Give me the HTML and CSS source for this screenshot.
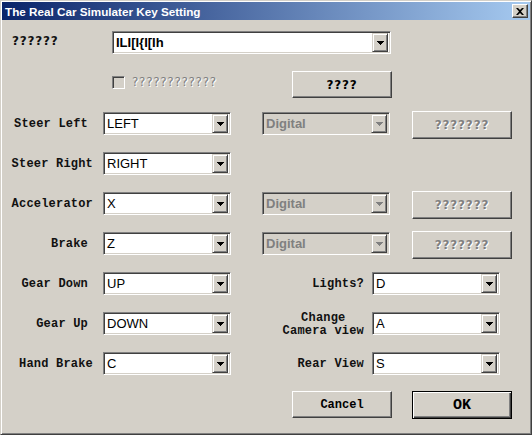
FILE: index.html
```html
<!DOCTYPE html>
<html lang="en">

<head>
    <meta charset="UTF-8">
    <title>The Real Car Simulater Key Setting</title>
    <link rel="stylesheet" href="styles.css">
</head>

<body>
    <div class="window">
        <div class="titlebar">
            <span class="title">The Real Car Simulater Key Setting</span>
            <span class="close">
                <svg width="8" height="7" viewBox="0 0 8 7"><path d="M0 0h2l2 2 2-2h2L5 3.5 8 7H6L4 5 2 7H0l3-3.5z" fill="#000"/></svg>
            </span>
        </div>

        <div class="form">
            <!-- device select -->
            <div class="row-top">
                <div class="q-label">??????</div>
                <div class="combo wide">
                    <span class="value strong">ILI[I{I[Ih</span>
                    <span class="drop"><svg width="7" height="4"><path d="M0 0h7v1H0zM1 1h5v1H1zM2 2h3v1H2zM3 3h1v1H3z"/></svg></span>
                </div>
            </div>

            <div class="row-check">
                <div class="check">
                    <span class="box"></span>
                    <span class="etched thin">????????????</span>
                </div>
                <div class="btn q">????</div>
            </div>

            <!-- key rows -->
            <div class="keys">
                <div class="key-row">
                    <div class="lbl short">Steer Left</div>
                    <div class="combo"><span class="value">LEFT</span><span class="drop"><svg width="7" height="4"><path d="M0 0h7v1H0zM1 1h5v1H1zM2 2h3v1H2zM3 3h1v1H3z"/></svg></span></div>
                    <div class="combo off"><span class="value">Digital</span><span class="drop"><svg width="7" height="4"><path d="M0 0h7v1H0zM1 1h5v1H1zM2 2h3v1H2zM3 3h1v1H3z"/></svg></span></div>
                    <div class="btn q etched">???????</div>
                </div>

                <div class="key-row">
                    <div class="lbl">Steer Right</div>
                    <div class="combo"><span class="value">RIGHT</span><span class="drop"><svg width="7" height="4"><path d="M0 0h7v1H0zM1 1h5v1H1zM2 2h3v1H2zM3 3h1v1H3z"/></svg></span></div>
                </div>

                <div class="key-row">
                    <div class="lbl">Accelerator</div>
                    <div class="combo"><span class="value">X</span><span class="drop"><svg width="7" height="4"><path d="M0 0h7v1H0zM1 1h5v1H1zM2 2h3v1H2zM3 3h1v1H3z"/></svg></span></div>
                    <div class="combo off"><span class="value">Digital</span><span class="drop"><svg width="7" height="4"><path d="M0 0h7v1H0zM1 1h5v1H1zM2 2h3v1H2zM3 3h1v1H3z"/></svg></span></div>
                    <div class="btn q etched">???????</div>
                </div>

                <div class="key-row">
                    <div class="lbl short">Brake</div>
                    <div class="combo"><span class="value">Z</span><span class="drop"><svg width="7" height="4"><path d="M0 0h7v1H0zM1 1h5v1H1zM2 2h3v1H2zM3 3h1v1H3z"/></svg></span></div>
                    <div class="combo off"><span class="value">Digital</span><span class="drop"><svg width="7" height="4"><path d="M0 0h7v1H0zM1 1h5v1H1zM2 2h3v1H2zM3 3h1v1H3z"/></svg></span></div>
                    <div class="btn q etched">???????</div>
                </div>

                <div class="key-row">
                    <div class="lbl short">Gear Down</div>
                    <div class="combo"><span class="value">UP</span><span class="drop"><svg width="7" height="4"><path d="M0 0h7v1H0zM1 1h5v1H1zM2 2h3v1H2zM3 3h1v1H3z"/></svg></span></div>
                    <div class="lbl right">Lights?</div>
                    <div class="combo"><span class="value">D</span><span class="drop"><svg width="7" height="4"><path d="M0 0h7v1H0zM1 1h5v1H1zM2 2h3v1H2zM3 3h1v1H3z"/></svg></span></div>
                </div>

                <div class="key-row">
                    <div class="lbl short">Gear Up</div>
                    <div class="combo"><span class="value">DOWN</span><span class="drop"><svg width="7" height="4"><path d="M0 0h7v1H0zM1 1h5v1H1zM2 2h3v1H2zM3 3h1v1H3z"/></svg></span></div>
                    <div class="lbl right two">Change<br>Camera view</div>
                    <div class="combo"><span class="value">A</span><span class="drop"><svg width="7" height="4"><path d="M0 0h7v1H0zM1 1h5v1H1zM2 2h3v1H2zM3 3h1v1H3z"/></svg></span></div>
                </div>

                <div class="key-row">
                    <div class="lbl">Hand Brake</div>
                    <div class="combo"><span class="value">C</span><span class="drop"><svg width="7" height="4"><path d="M0 0h7v1H0zM1 1h5v1H1zM2 2h3v1H2zM3 3h1v1H3z"/></svg></span></div>
                    <div class="lbl right">Rear View</div>
                    <div class="combo"><span class="value">S</span><span class="drop"><svg width="7" height="4"><path d="M0 0h7v1H0zM1 1h5v1H1zM2 2h3v1H2zM3 3h1v1H3z"/></svg></span></div>
                </div>
            </div>

            <div class="actions">
                <div class="btn mono">Cancel</div>
                <div class="btn mono ok">OK</div>
            </div>
        </div>
    </div>
</body>

</html>
```

FILE: styles.css
```css
body {
    margin: 0;
    background: #d4d0c8;
    font-family: 'Liberation Sans', Arial, sans-serif;
}

/* window frame, classic 3D look */
.window {
    box-sizing: border-box;
    width: 532px;
    height: 435px;
    padding: 1px;
    background: #d4d0c8;
    border: 1px solid;
    border-color: #d4d0c8 #404040 #404040 #d4d0c8;
    box-shadow: inset 1px 1px #fff, inset -1px -1px #808080;
}

.titlebar {
    display: flex;
    align-items: center;
    justify-content: space-between;
    height: 18px;
    background: linear-gradient(to right, #0a246a, #a6caf0);
}

.title {
    padding-left: 3px;
    color: #fff;
    font-weight: bold;
    font-size: 11.7px;
    white-space: nowrap;
}

.close {
    display: flex;
    align-items: center;
    justify-content: center;
    box-sizing: border-box;
    width: 16px;
    height: 14px;
    margin-right: 2px;
    background: #d4d0c8;
    border: 1px solid;
    border-color: #fff #404040 #404040 #fff;
    box-shadow: inset -1px -1px #808080;
}

.form {
    padding: 11px 0 0 7px;
}

/* top row */
.row-top {
    display: flex;
    align-items: flex-start;
}

.q-label {
    width: 100px;
    padding: 3px 0 0 3px;
    font-family: 'DejaVu Sans', Verdana, sans-serif;
    font-weight: bold;
    font-size: 12px;
    letter-spacing: 0.8px;
    color: #111;
}

.row-check {
    display: flex;
    align-items: flex-start;
    height: 27px;
    margin-top: 17px;
}

.check {
    display: flex;
    align-items: center;
    width: 180px;
    margin: 4px 0 0 103px;
}

.box {
    box-sizing: border-box;
    width: 13px;
    height: 13px;
    margin-right: 7px;
    border: 1px solid;
    border-color: #808080 #fff #fff #808080;
    box-shadow: inset 1px 1px #404040, inset -1px -1px #d4d0c8;
}

.etched {
    color: #808080;
    text-shadow: 1px 1px #fff;
}

.thin {
    font-family: 'DejaVu Sans', Verdana, sans-serif;
    font-size: 12px;
    letter-spacing: 0.7px;
}

/* combo boxes */
.combo {
    box-sizing: border-box;
    display: flex;
    align-items: center;
    justify-content: space-between;
    width: 128px;
    height: 23px;
    margin-top: 1px;
    background: #fff;
    border: 1px solid;
    border-color: #808080 #fff #fff #808080;
    box-shadow: inset 1px 1px #404040, inset -1px -1px #d4d0c8;
    padding: 2px 2px 2px 3px;
}

.combo.wide {
    width: 279px;
    margin-top: 0;
}

.value {
    font-size: 13px;
    color: #000;
    white-space: nowrap;
}

.strong {
    font-weight: bold;
}

.drop {
    box-sizing: border-box;
    display: flex;
    align-items: center;
    justify-content: center;
    width: 16px;
    height: 19px;
    background: #d4d0c8;
    border: 1px solid;
    border-color: #d4d0c8 #404040 #404040 #d4d0c8;
    box-shadow: inset 1px 1px #fff, inset -1px -1px #808080;
}

.drop svg {
    fill: #000;
}

.combo.off {
    margin-left: 31px;
    background: #d4d0c8;
}

.combo.off .value {
    color: #808080;
    font-weight: bold;
}

.combo.off .drop svg {
    fill: #808080;
}

/* buttons */
.btn {
    box-sizing: border-box;
    display: flex;
    align-items: center;
    justify-content: center;
    width: 100px;
    height: 27px;
    background: #d4d0c8;
    border: 1px solid;
    border-color: #fff #404040 #404040 #fff;
    box-shadow: inset -1px -1px #808080;
    color: #000;
}

.btn.q {
    font-family: 'DejaVu Sans', Verdana, sans-serif;
    font-weight: bold;
    font-size: 12px;
    letter-spacing: 0.8px;
}

.key-row .btn {
    height: 28px;
    margin-left: 22px;
}

.btn.etched {
    color: #808080;
}

.btn.mono {
    font-family: 'Liberation Mono', 'Courier New', monospace;
    font-weight: bold;
    font-size: 12px;
}

.btn.ok {
    height: 28px;
    font-size: 15px;
    border: 1px solid #000;
    box-shadow: inset 1px 1px #fff, inset -1px -1px #404040, inset -2px -2px #808080;
}

/* key rows */
.keys {
    margin-top: 13px;
}

.key-row {
    display: flex;
    align-items: flex-start;
    height: 40px;
}

.lbl {
    box-sizing: border-box;
    display: flex;
    align-items: center;
    justify-content: flex-end;
    width: 86px;
    height: 23px;
    margin: 1px 8px 0 0;
    padding-right: 2px;
    font-family: 'Liberation Mono', 'Courier New', monospace;
    font-weight: bold;
    font-size: 12px;
    letter-spacing: 0.2px;
    color: #111;
    white-space: nowrap;
}

.lbl.short {
    padding-right: 7px;
}

.lbl.right {
    width: 133px;
    padding-right: 0;
}

.lbl.two {
    text-align: center;
    line-height: 13px;
    padding-top: 2px;
}

.actions {
    display: flex;
    gap: 20px;
    margin-left: 283px;
}
```
